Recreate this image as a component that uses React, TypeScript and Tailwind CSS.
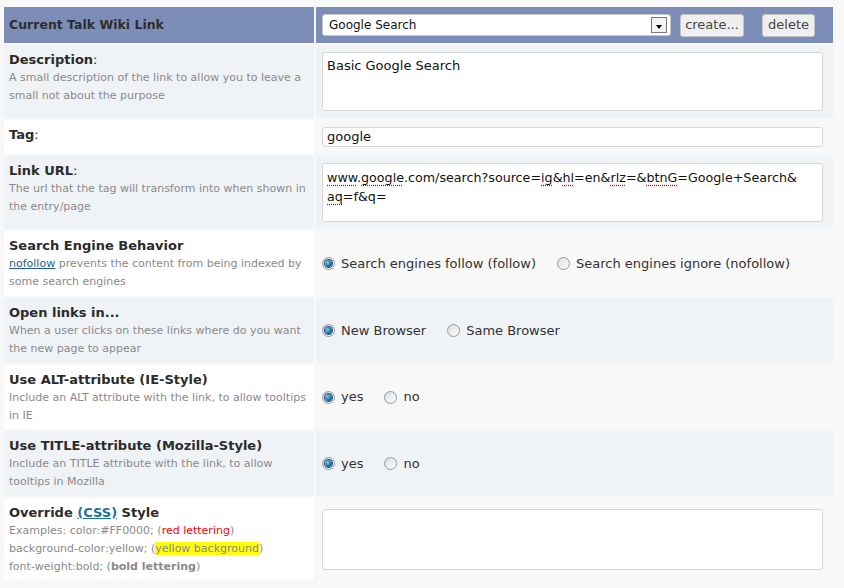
import React from "react"

const font = { fontFamily: '"DejaVu Sans", Verdana, sans-serif' }

const Radio = ({ checked }: { checked?: boolean }) => (
    <span className="relative inline-flex h-[13px] w-[13px] shrink-0 items-center justify-center rounded-full border border-[#8e9aa6] bg-gradient-to-br from-[#dcdcdc] to-[#ffffff]">
        {checked && (
            <span className="h-[7px] w-[7px] rounded-full bg-[radial-gradient(circle_at_35%_35%,#7fc3f0,#0b5d9c_70%)] ring-1 ring-[#2a4f6f]" />
        )}
    </span>
)

const RadioGroup = ({ options }: { options: { text: string; checked?: boolean }[] }) => (
    <div className="flex items-center gap-[21px] text-[13px] text-[#333]">
        {options.map((o) => (
            <label key={o.text} className="flex items-center gap-[6px]">
                <Radio checked={o.checked} />
                <span>{o.text}</span>
            </label>
        ))}
    </div>
)

const Spell = ({ children }: { children: React.ReactNode }) => (
    <span className="underline decoration-dotted decoration-[#d00] underline-offset-[3px]">{children}</span>
)

interface RowProps {
    label: React.ReactNode
    help?: React.ReactNode
    alt?: boolean
    h: string
    children: React.ReactNode
}

const Row: React.FC<RowProps> = ({ label, help, alt, h, children }) => (
    <>
        <div className={`${h} px-[5px] pt-[6px] pb-[5px] ${alt ? "bg-[#f0f3f6]" : "bg-white"}`}>
            <div className="text-[13px] font-bold leading-[18px] text-[#2b2b2b]">{label}</div>
            {help && <div className="text-[11px] leading-[18px] text-[#8a8a8a]">{help}</div>}
        </div>
        <div className={`${h} flex items-center px-[6px] ${alt ? "bg-[#f0f3f6]" : "bg-[#f8f8f8]"}`}>{children}</div>
    </>
)

const Colon = () => <span className="font-normal">:</span>

export default function App() {
    return (
        <div className="min-h-[588px] bg-[#f8f8f8] pt-[7px] pl-[4px]" style={font}>
            <div className="grid grid-cols-[310px_517px] gap-[2px]">
                <div className="flex h-[36px] items-center bg-[#7c8eb7] px-[5px] text-[12.5px] font-bold text-[#2d2d2d]">
                    Current Talk Wiki Link
                </div>
                <div className="flex h-[36px] items-center bg-[#7c8eb7] px-[6px]">
                    <div className="flex h-[22px] w-[349px] items-center justify-between rounded-[3px] border border-[#c8c8c8] bg-white pl-[6px] pr-[3px] text-[12px] text-[#111]">
                        <span>Google Search</span>
                        <span className="flex h-[16px] w-[16px] items-center justify-center border border-[#777] bg-[#f4f4f4]">
                            <span className="mt-[3px] h-0 w-0 border-x-[3.5px] border-t-[4px] border-x-transparent border-t-black" />
                        </span>
                    </div>
                    <button className="ml-[9px] h-[23px] w-[64px] rounded-[3px] border border-[#c4c4c4] bg-[#efefef] text-[13px] text-[#444]">create...</button>
                    <button className="ml-[18px] h-[23px] w-[53px] rounded-[3px] border border-[#c4c4c4] bg-[#efefef] text-[13px] text-[#444]">delete</button>
                </div>

                <Row alt h="h-[73px]" label={<>Description<Colon /></>} help="A small description of the link to allow you to leave a small not about the purpose">
                    <div className="h-[59px] w-[501px] rounded-[3px] border border-[#d6d6d6] bg-white px-[4px] py-[4px] text-[13px] leading-[18px] text-[#111]">Basic Google Search</div>
                </Row>

                <Row h="h-[34px]" label={<>Tag<Colon /></>}>
                    <div className="flex h-[20px] w-[501px] items-center rounded-[3px] border border-[#d6d6d6] bg-white px-[4px] text-[13px] text-[#111]">google</div>
                </Row>

                <Row alt h="h-[73px]" label={<>Link URL<Colon /></>} help="The url that the tag will transform into when shown in the entry/page">
                    <div className="h-[59px] w-[501px] rounded-[3px] border border-[#d6d6d6] bg-white px-[4px] py-[4px] text-[12.7px] leading-[19px] text-[#111] break-all">
                        <Spell>www</Spell>.<Spell>google</Spell>.com/search?source=<Spell>ig</Spell>&amp;<Spell>hl</Spell>=en&amp;<Spell>rlz</Spell>=&amp;<Spell>btnG</Spell>=Google+Search&amp;
                        <br />
                        <Spell>aq</Spell>=f&amp;q=
                    </div>
                </Row>

                <Row
                    h="h-[65px]"
                    label="Search Engine Behavior"
                    help={<><span className="text-[#1d5d8c] underline">nofollow</span> prevents the content from being indexed by some search engines</>}
                >
                    <RadioGroup options={[{ text: "Search engines follow (follow)", checked: true }, { text: "Search engines ignore (nofollow)" }]} />
                </Row>

                <Row alt h="h-[65px]" label="Open links in..." help="When a user clicks on these links where do you want the new page to appear">
                    <RadioGroup options={[{ text: "New Browser", checked: true }, { text: "Same Browser" }]} />
                </Row>

                <Row h="h-[64px]" label="Use ALT-attribute (IE-Style)" help="Include an ALT attribute with the link, to allow tooltips in IE">
                    <RadioGroup options={[{ text: "yes", checked: true }, { text: "no" }]} />
                </Row>

                <Row alt h="h-[65px]" label="Use TITLE-attribute (Mozilla-Style)" help="Include an TITLE attribute with the link, to allow tooltips in Mozilla">
                    <RadioGroup options={[{ text: "yes", checked: true }, { text: "no" }]} />
                </Row>

                <Row
                    h="h-[82px]"
                    label={<>Override <span className="text-[#1d6f9f] underline">(CSS)</span> Style</>}
                    help={
                        <>
                            <div>Examples: color:#FF0000; (<span className="text-[#ff0000]">red lettering</span>)</div>
                            <div>background-color:yellow; (<span className="bg-[#ffff00]">yellow background</span>)</div>
                            <div>font-weight:bold; (<span className="font-bold">bold lettering</span>)</div>
                        </>
                    }
                >
                    <div className="h-[61px] w-[501px] rounded-[3px] border border-[#d6d6d6] bg-white" />
                </Row>
            </div>
        </div>
    )
}
